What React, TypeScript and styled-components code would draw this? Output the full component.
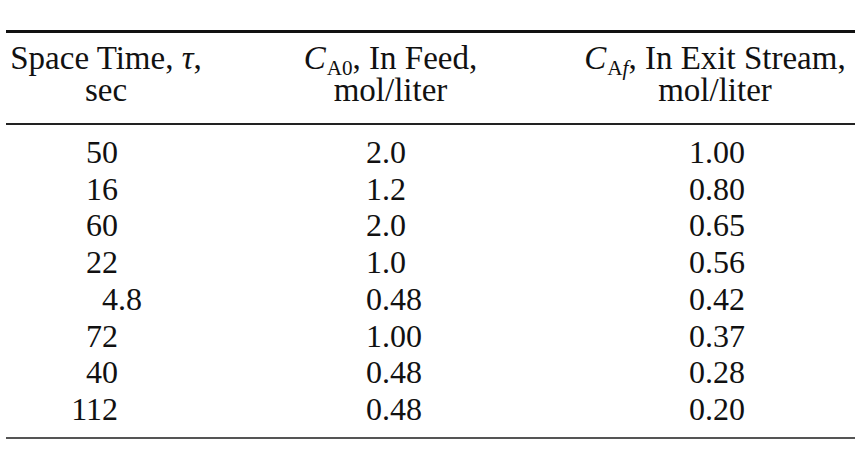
import React from 'react'
import styled, { createGlobalStyle } from 'styled-components'

const GlobalStyle = createGlobalStyle`
    html, body {
        margin: 0;
        padding: 0;
        background: #ffffff;
    }
    body {
        font-family: "Liberation Serif", "Times New Roman", serif;
        color: #111111;
    }
`;

const COLUMNS = '200px 369px 280px';

const Page = styled.div`
    padding: 30px 0 0 6px;
`;

const Table = styled.div`
    width: 849px;
`;

const HeaderRow = styled.div`
    display: grid;
    grid-template-columns: ${COLUMNS};
    border-top: 3px solid #111;
    border-bottom: 2px solid #222;
    padding: 9px 0 17px;
`;

const HeaderCell = styled.div`
    display: flex;
    flex-direction: column;
    align-items: center;
    font-size: 33px;
    white-space: nowrap;
`;

const HeaderLine = styled.div`
    line-height: 32px;
    height: 32px;
`;

const Body = styled.div`
    padding: 9px 0 9px;
    border-bottom: 2px solid #555;
`;

const Row = styled.div`
    display: grid;
    grid-template-columns: ${COLUMNS};
    font-size: 32px;
    line-height: 36.7px;
`;

const NumberCell = styled.div`
    display: flex;
    white-space: nowrap;
`;

const IntPart = styled.span<{ $point: number }>`
    width: ${({ $point }) => $point}px;
    text-align: right;
    flex: none;
`;

const FracPart = styled.span`
    text-align: left;
`;

const Sym = styled.i`
    font-style: italic;
`;

const Sub = styled.span`
    font-size: 0.64em;
    position: relative;
    top: 0.3em;
    margin-left: 1px;
`;

// decimal point position inside each column
const POINTS = [112, 176, 130];

const rows: string[][] = [
    ['50', '2.0', '1.00'],
    ['16', '1.2', '0.80'],
    ['60', '2.0', '0.65'],
    ['22', '1.0', '0.56'],
    ['4.8', '0.48', '0.42'],
    ['72', '1.00', '0.37'],
    ['40', '0.48', '0.28'],
    ['112', '0.48', '0.20'],
];

const Decimal = ({ value, point }: { value: string; point: number }) => {
    const dot = value.indexOf('.');
    const int = dot === -1 ? value : value.slice(0, dot);
    const frac = dot === -1 ? '' : value.slice(dot);
    return (
        <NumberCell>
            <IntPart $point={point}>{int}</IntPart>
            <FracPart>{frac}</FracPart>
        </NumberCell>
    );
};

const App = (): JSX.Element => {
    return (
        <Page>
            <GlobalStyle />
            <Table>
                <HeaderRow>
                    <HeaderCell>
                        <HeaderLine>
                            Space Time, <Sym>τ</Sym>,
                        </HeaderLine>
                        <HeaderLine>sec</HeaderLine>
                    </HeaderCell>
                    <HeaderCell>
                        <HeaderLine>
                            <Sym>C</Sym>
                            <Sub>A0</Sub>, In Feed,
                        </HeaderLine>
                        <HeaderLine>mol/liter</HeaderLine>
                    </HeaderCell>
                    <HeaderCell>
                        <HeaderLine>
                            <Sym>C</Sym>
                            <Sub>
                                A<Sym>f</Sym>
                            </Sub>
                            , In Exit Stream,
                        </HeaderLine>
                        <HeaderLine>mol/liter</HeaderLine>
                    </HeaderCell>
                </HeaderRow>
                <Body>
                    {rows.map((r, i) => (
                        <Row key={i}>
                            {r.map((v, j) => (
                                <Decimal key={j} value={v} point={POINTS[j]} />
                            ))}
                        </Row>
                    ))}
                </Body>
            </Table>
        </Page>
    );
};

export default App
